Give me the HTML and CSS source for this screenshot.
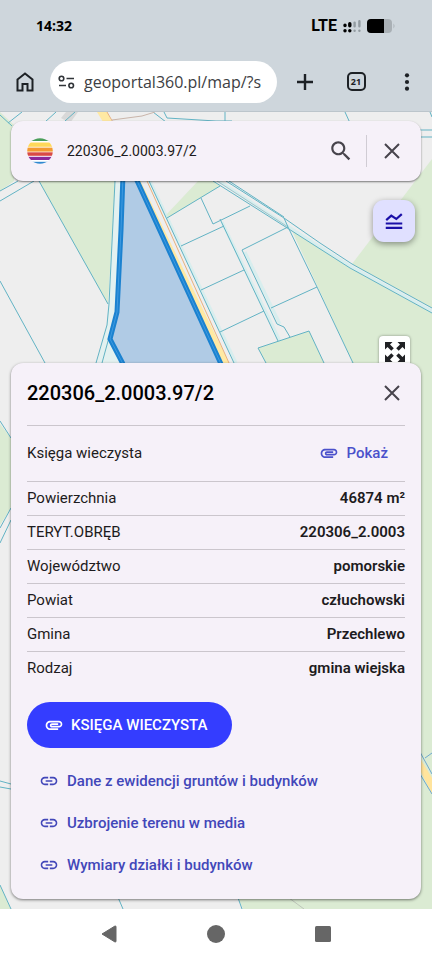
FILE: index.html
```html
<!DOCTYPE html>
<html lang="pl">
<head>
<meta charset="utf-8">
<meta name="viewport" content="width=device-width, initial-scale=1">
<title>Geoportal 360</title>
<link rel="stylesheet" href="styles.css">
</head>
<body>
<svg class="symbols" aria-hidden="true">
  <symbol id="close" viewBox="0 0 24 24"><path d="M5 5L19 19M19 5L5 19" fill="none" stroke="currentColor" stroke-width="2"/></symbol>
  <symbol id="clip" viewBox="0 0 24 24"><path d="M2 12.500C2 9.460 4.460 7 7.500 7H18c2.210 0 4 1.790 4 4s-1.790 4-4 4H9.500C8.120 15 7 13.880 7 12.500S8.120 10 9.500 10H17v2H9.410c-.550 0-.550 1 0 1H18c1.100 0 2-.900 2-2s-.900-2-2-2H7.500C5.570 9 4 10.570 4 12.500S5.570 16 7.500 16H17v2H7.500C4.460 18 2 15.540 2 12.500z" fill="currentColor"/></symbol>
  <symbol id="link" viewBox="0 0 24 24"><path d="M3.900 12c0-1.710 1.390-3.100 3.100-3.100h4V7H7c-2.760 0-5 2.240-5 5s2.240 5 5 5h4v-1.900H7c-1.710 0-3.100-1.390-3.100-3.100zM8 13h8v-2H8v2zm9-6h-4v1.900h4c1.710 0 3.100 1.390 3.100 3.100s-1.390 3.100-3.100 3.100h-4V17h4c2.760 0 5-2.240 5-5s-2.240-5-5-5z" fill="currentColor"/></symbol>
</svg>

<header class="browser">
  <div class="status">
    <span class="time">14:32</span>
    <span class="signal">
      <span class="network">LTE</span>
      <svg width="18" height="14" viewBox="0 0 18 14" aria-hidden="true">
        <g stroke="#000" stroke-width="3.400" stroke-linecap="round"><path d="M2 11.600v.1M6.800 11.600v.1M2 6.200v.4M6.800 4.800v2"/></g>
        <g stroke="#929ba1" stroke-width="2.400" stroke-linecap="round"><path d="M11.600 11.600v.1M16.400 11.600v.1M11.600 3.600v3.600M16.400 2.200v5"/></g>
      </svg>
      <svg class="battery" width="29" height="14" viewBox="0 0 29 14" aria-hidden="true">
        <rect width="25" height="14" rx="4" fill="#a9b0b5"/><path d="M4 0H17V14H4Q0 14 0 10V4Q0 0 4 0Z"/><path d="M26.500 4.500Q28.500 7 26.500 9.500Z" fill="#a9b0b5"/>
      </svg>
    </span>
  </div>
  <div class="toolbar">
    <button class="bar-btn" aria-label="Strona główna"><svg width="20" height="22" viewBox="0 0 20 22"><path d="M2.500 8.500L10 2.500l7.500 6V19.500H12.500V13H7.500V19.500H2.500Z" fill="none" stroke="#1d2125" stroke-width="2"/></svg></button>
    <label class="address">
      <svg width="17" height="14" viewBox="0 0 17 14" fill="none" stroke="#303438" stroke-width="1.600" aria-hidden="true"><circle cx="3.500" cy="3.500" r="2.300"/><path d="M8.500 3.500H16M1 10.500H8"/><circle cx="13.200" cy="10.500" r="2.300"/></svg>
      <input type="text" value="geoportal360.pl/map/?s" aria-label="Adres">
    </label>
    <button class="bar-btn plus" aria-label="Nowa karta"><svg width="18" height="18" viewBox="0 0 18 18"><path d="M9 1V17M1 9H17" stroke="#1d2125" stroke-width="2.400"/></svg></button>
    <button class="bar-btn" aria-label="Karty"><span class="tabs">21</span></button>
    <button class="bar-btn" aria-label="Menu"><svg width="6" height="18" viewBox="0 0 6 18" fill="#1d2125"><circle cx="3" cy="2.300" r="2.100"/><circle cx="3" cy="9" r="2.100"/><circle cx="3" cy="15.700" r="2.100"/></svg></button>
  </div>
</header>

<main class="map">
  <svg class="tiles" viewBox="0 112 432 797" preserveAspectRatio="xMidYMin slice" aria-hidden="true">
    <rect y="112" width="432" height="797" fill="#eeeeee"/>
    <g fill="#dbebd3">
      <path d="M0 112L14 125V181L0 191Z"/>
      <path d="M39 181H116L108 304Z"/>
      <path d="M166 215L198 181H213L220 186L167 218Z"/>
      <path d="M292 231L350 268L432 313V909H243L237 895L352 361Z"/>
      <path d="M352 264L432 159V308Z"/>
      <path d="M258 348L309 331L324 363H266Z"/>
      <path d="M0 424L11 438V508L0 525Z"/>
      <path d="M0 885L11 909H0Z"/>
    </g>
    <path d="M115 181H121L116 310L109 340L120 363H97L107 325Z" fill="#e3f1f0"/>
    <path d="M97 112H107L229 363H221L139 181Z" fill="#ffe9a3"/>
    <path d="M107 112L147 181L229 363" stroke="#e9b07c" fill="none"/>
    <path d="M61 118L66 112H78L70 123Z" fill="#d8d8d8"/>
    <g fill="none" stroke="#c9eeee" stroke-width="3" opacity=".6">
      <path d="M219 181L292 229L350 266L432 311M150 181L236 363M222 222L280 341M245 252L280 324"/>
    </g>
    <g fill="none" stroke="#62b3c4" stroke-width="1">
      <path d="M39 181L108 304M115 181L109 304L107 325L96 363M116 312L102 363"/>
      <path d="M0 281L45 363M0 191L18 181M0 201L34 181M8 123L22 112M0 115L12 126M45 122L56 112M65 121L75 112"/>
      <path d="M153 112L166 122M164 112L167 118L216 121M225 112V121M216 121H232M345 112L350 123M430 112L432 117"/>
      <path d="M112 120L142 116L155 112" stroke="#c9b5aa"/>
      <path d="M420 130H432M420 137H432"/>
      <path d="M149 181L234 363M167 218L220 186M201 198L213 224L250 206M213 181L292 231L350 268L432 313"/>
      <path d="M226 181L284 218L320 243L352 264L432 308M229 181L284 217"/>
      <path d="M217 181L288 227" stroke="#9fc4cb"/>
      <path d="M220 219L278 341M181 246L224 226M201 290L244 270M220 332L264 311"/>
      <path d="M288 227L242 250L277 324L284 327L290 337M271 308L317 287M284 218L288 227L317 287L353 363"/>
      <path d="M266 363L258 348L309 331L324 363"/>
      <path d="M0 421L11 438M0 528L11 508M0 543L11 520M0 781L11 784M0 787L11 789"/>
      <path d="M0 885L11 909M117 895L123 909M237 895L242 909"/>
      <path d="M285 895L304 909" stroke="#bdc5b9"/>
    </g>
    <path d="M420 758L432 778V794L420 770Z" fill="#ffe49d"/>
    <path d="M420 752L432 774M425 758L432 753M420 774L432 794" stroke="#6fa9cf" fill="none"/>
    <path d="M122 181H137L221 363H123L110 338L117 312Z" fill="#b0cbe5"/>
    <path d="M123 174L121 230L117 312L110 339L123 364M134 174L221 364" fill="none" stroke="#1b82d0" stroke-width="5"/>
    <path d="M123 174L121 230L117 312L110 339L123 364M134 174L221 364" fill="none" stroke="#3e9ae0" stroke-width="1"/>
  </svg>

  <form class="search">
    <svg class="logo" width="26" height="26" viewBox="0 0 26 26" aria-hidden="true">
      <clipPath id="disc"><circle cx="13" cy="13" r="12.800"/></clipPath>
      <g clip-path="url(#disc)"><rect width="26" height="26" fill="#fff"/>
      <rect width="26" height="3" fill="#4a9d5b"/><rect y="4.500" width="26" height="4.300" fill="#ffd85a"/><rect y="9.600" width="26" height="4" fill="#f39a31"/><rect y="14.300" width="26" height="3.500" fill="#d94a45"/><rect y="18.800" width="26" height="3.200" fill="#8b2a9a"/><rect y="23.800" width="26" height="3" fill="#3189d0"/></g>
    </svg>
    <input type="text" value="220306_2.0003.97/2" aria-label="Szukaj działki">
    <button type="button" class="icon-btn" aria-label="Szukaj"><svg width="26" height="26" viewBox="0 0 24 24"><path d="M15.500 14h-.790l-.280-.270C15.410 12.590 16 11.110 16 9.500 16 5.910 13.090 3 9.500 3S3 5.910 3 9.500 5.910 16 9.500 16c1.610 0 3.090-.590 4.230-1.570l.270.280v.790l5 4.990L20.490 19l-4.990-5zm-6 0C7.010 14 5 11.990 5 9.500S7.010 5 9.500 5 14 7.010 14 9.500 11.990 14 9.500 14z" fill="currentColor"/></svg></button>
    <span class="divider"></span>
    <button type="button" class="icon-btn" aria-label="Wyczyść"><svg width="24" height="24"><use href="#close"/></svg></button>
  </form>

  <div class="tools">
    <button class="layers" aria-label="Warstwy"><svg width="22" height="22" viewBox="0 0 24 24" fill="none" stroke="#1b10a8" stroke-width="2.400"><path d="M3 19.500H21M3 14.700H21M3.500 11L9 6.200L14.500 9.800L20.500 4.500"/></svg></button>
    <button class="fullscreen" aria-label="Pełny ekran"><svg width="22" height="22" viewBox="0 0 22 22" fill="#202124"><path id="corner" d="M1 1H8.500L6 3.500L9.800 7.300L7.300 9.800L3.500 6L1 8.500Z"/><use href="#corner" transform="rotate(90 11 11)"/><use href="#corner" transform="rotate(180 11 11)"/><use href="#corner" transform="rotate(270 11 11)"/></svg></button>
  </div>

  <section class="card">
    <div class="card-head">
      <h1>220306_2.0003.97/2</h1>
      <button class="icon-btn" aria-label="Zamknij"><svg width="24" height="24"><use href="#close"/></svg></button>
    </div>
    <table>
      <tr class="tall"><th scope="row">Księga wieczysta</th><td><button class="show"><svg width="20" height="20"><use href="#clip"/></svg>Pokaż</button></td></tr>
      <tr><th scope="row">Powierzchnia</th><td>46874 m²</td></tr>
      <tr><th scope="row">TERYT.OBRĘB</th><td>220306_2.0003</td></tr>
      <tr><th scope="row">Województwo</th><td>pomorskie</td></tr>
      <tr><th scope="row">Powiat</th><td>człuchowski</td></tr>
      <tr><th scope="row">Gmina</th><td>Przechlewo</td></tr>
      <tr><th scope="row">Rodzaj</th><td>gmina wiejska</td></tr>
    </table>
    <button class="primary"><svg width="20" height="20"><use href="#clip"/></svg>KSIĘGA WIECZYSTA</button>
    <nav class="links">
      <a href="#ewidencja"><svg width="20" height="20"><use href="#link"/></svg>Dane z ewidencji gruntów i budynków</a>
      <a href="#uzbrojenie"><svg width="20" height="20"><use href="#link"/></svg>Uzbrojenie terenu w media</a>
      <a href="#wymiary"><svg width="20" height="20"><use href="#link"/></svg>Wymiary działki i budynków</a>
    </nav>
  </section>
</main>

<footer class="system">
  <button aria-label="Wstecz"><svg width="18" height="20" viewBox="0 0 18 20"><path d="M15 2L2 10L15 18Q16 18.400 16 17V3Q16 1.600 15 2Z" fill="#666" stroke="#666"/></svg></button>
  <button aria-label="Ekran główny"><svg width="18" height="18"><circle cx="9" cy="9" r="9" fill="#666"/></svg></button>
  <button aria-label="Ostatnie"><svg width="16" height="16"><rect width="16" height="16" rx="1.500" fill="#666"/></svg></button>
</footer>
</body>
</html>
```
FILE: styles.css
```css
* { box-sizing: border-box; }
body {
  margin: 0;
  min-height: 100vh;
  display: flex;
  flex-direction: column;
  background: #fff;
  color: #1d1b20;
  font: 15px/20px Roboto, sans-serif;
}
button, input { font: inherit; color: inherit; border: 0; background: none; padding: 0; margin: 0; }
button { display: flex; align-items: center; justify-content: center; cursor: pointer; }
svg { display: block; flex: none; }
.symbols { position: absolute; width: 0; height: 0; }

.browser { background: #ced6dc; }
.status {
  height: 52px;
  padding: 0 36px;
  display: flex;
  align-items: center;
  justify-content: space-between;
  color: #000;
}
.time { font: 700 14px/20px "Open Sans", sans-serif; }
.signal { display: flex; align-items: center; gap: 6px; }
.network { font-size: 16px; font-weight: 700; }
.toolbar {
  height: 60px;
  padding: 0 15px;
  border-bottom: 1px solid #bcc5cb;
  display: flex;
  align-items: center;
}
.bar-btn { flex: none; width: 20px; height: 40px; margin-left: 31px; }
.bar-btn:first-child { margin-left: 0; }
.bar-btn.plus { margin-left: 18px; }
.address {
  flex: 1;
  min-width: 0;
  height: 42px;
  margin-left: 15px;
  padding: 0 8px;
  border-radius: 21px;
  background: #fff;
  display: flex;
  align-items: center;
  gap: 9px;
}
.address input { flex: 1; min-width: 0; font: 16px/24px "Open Sans", sans-serif; color: #3d4043; }
.tabs {
  flex: none;
  width: 19px;
  height: 19px;
  border: 2px solid #1d2125;
  border-radius: 5px;
  font: 700 9px/15px "Open Sans", sans-serif;
  color: #1d2125;
}

.map {
  position: relative;
  flex: 1;
  padding: 9px 11px 10px;
  overflow: hidden;
  display: flex;
  flex-direction: column;
}
.tiles { position: absolute; inset: 0; width: 100%; height: 100%; }
.search, .tools, .card { position: relative; }
.search {
  height: 60px;
  padding: 0 16px;
  border-radius: 12px;
  background: #f6f1f9;
  box-shadow: 0 1px 2px rgba(0, 0, 0, .5);
  display: flex;
  align-items: center;
}
.search input { flex: 1; min-width: 0; margin-left: 14px; font-size: 14px; }
.icon-btn { flex: none; width: 26px; height: 26px; color: #47444c; }
.icon-btn svg { overflow: visible; }
.divider { width: 1px; height: 32px; margin: 0 12px; background: #d0ccd4; }

.tools {
  padding: 19px 6px 0;
  height: 182px;
  display: flex;
  flex-direction: column;
  align-items: flex-end;
  justify-content: space-between;
}
.layers {
  width: 42px;
  height: 42px;
  border-radius: 11px;
  background: #e0e0ff;
  box-shadow: 0 2px 6px rgba(0, 0, 0, .4);
}
.fullscreen {
  flex: none;
  width: 31px;
  height: 32px;
  margin: 0 5px -5px 0;
  border-radius: 4px;
  background: #fff;
  box-shadow: 0 0 3px rgba(0, 0, 0, .4);
}

.card {
  flex: 1;
  padding: 0 16px 12px;
  border-radius: 12px;
  background: #f6f1f9;
  box-shadow: 0 1px 3px rgba(0, 0, 0, .5);
}
.card-head { height: 62px; padding-bottom: 2px; display: flex; align-items: center; justify-content: space-between; }
h1 { margin: 0; font-size: 20px; line-height: 28px; font-weight: 500; color: #000; }
table { width: 100%; border-spacing: 0; }
th, td { height: 34px; padding: 0 0 1px; border-top: 1px solid #cbc6cd; font-weight: 400; text-align: left; }
td { font-weight: 600; text-align: right; }
.tall th, .tall td { height: 56px; padding-bottom: 2px; }
.show { margin-left: auto; margin-right: 17px; gap: 8px; font-weight: 500; color: #4b51cb; }
.primary {
  height: 46px;
  margin-top: 17px;
  padding: 0 25px 0 17px;
  border-radius: 23px;
  background: #343dff;
  color: #fff;
  font-weight: 500;
  gap: 7px;
}
.links { margin-top: 12px; }
.links a {
  height: 42px;
  padding-left: 12px;
  display: flex;
  align-items: center;
  gap: 8px;
  color: #4247b9;
  font-weight: 500;
  text-decoration: none;
}

.system { height: 51px; padding: 0 46px 2px; display: flex; align-items: center; justify-content: center; gap: 61px; }
.system button { width: 46px; height: 40px; }
```
